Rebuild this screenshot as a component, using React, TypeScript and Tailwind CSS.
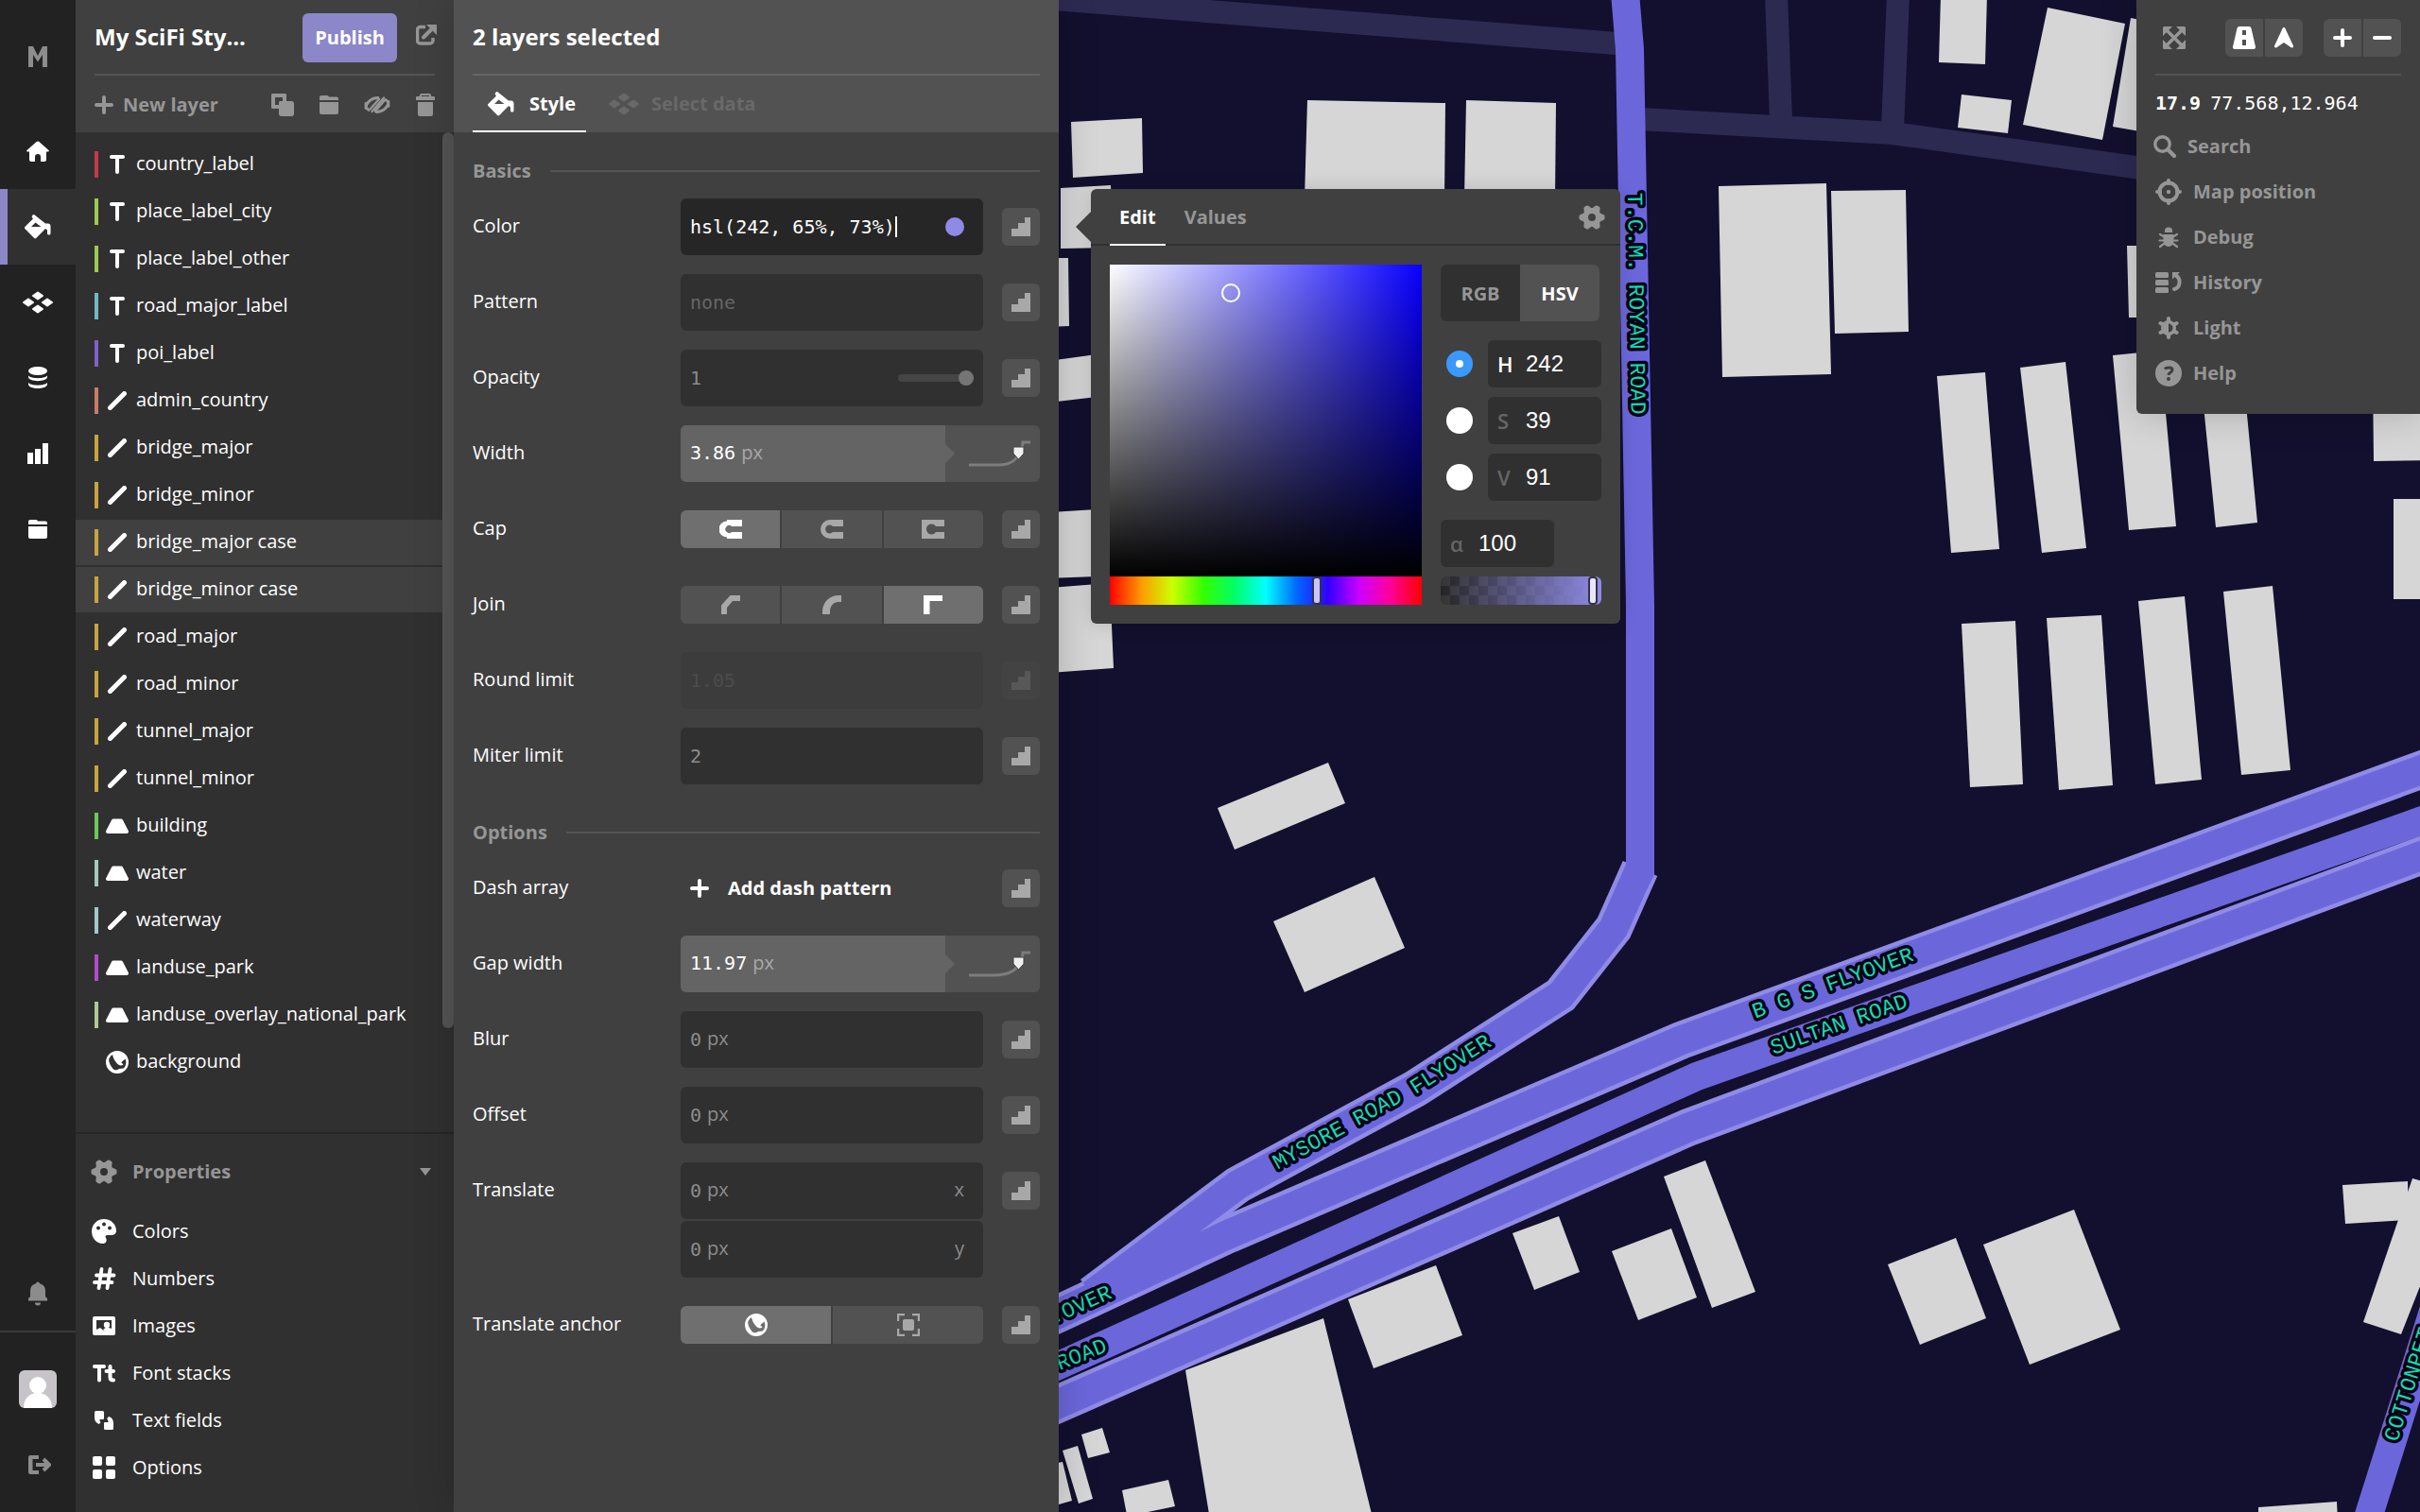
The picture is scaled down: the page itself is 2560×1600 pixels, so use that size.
import React, { useState } from "react";

type Kids = { children?: React.ReactNode };

const sans = "font-['Open_Sans','Noto_Sans',sans-serif]";
const mono = "font-['DejaVu_Sans_Mono','Liberation_Mono',monospace]";

function Svg({ w, h, children, className = "" }: Kids & { w: number; h: number; className?: string }) {
  return (
    <svg width={w} height={h} viewBox={`0 0 ${w} ${h}`} fill="currentColor" className={`shrink-0 ${className}`} aria-hidden="true">
      {children}
    </svg>
  );
}

const round = { fill: "none", stroke: "currentColor", strokeLinecap: "round", strokeLinejoin: "round" } as const;

const LogoIcon = () => (
  <Svg w={20} h={22}>
    <path d="M0 22V0h5l5 10 5-10h5v22h-5V9l-5 7.500-5-7.500v13z" />
  </Svg>
);
const HomeIcon = () => (
  <Svg w={24} h={22}>
    <path d="M12 .5c.6 0 1 .3 1.400.6L23.500 10c.8.8.3 1.500-.5 1.500H21V20a2 2 0 0 1-2 2h-4v-5a3 3 0 0 0-6 0v5H5a2 2 0 0 1-2-2v-8.500H1c-.8 0-1.300-.7-.5-1.500L10.600 1.100C11 .8 11.400.5 12 .5z" />
  </Svg>
);
const PaintIcon = () => (
  <Svg w={28} h={26}>
    <path
      fillRule="evenodd"
      d="M8.200 1.200a1.800 1.800 0 0 1 2.800-.4l11 8.700h2.500A3 3 0 0 1 27.500 12.500V20c0 2-3.500 2-3.500 0v-3.500L22 15l-9.500 9.800a1.800 1.800 0 0 1-2.600 0L.6 15.300a1.800 1.800 0 0 1 0-2.500L9 4.500 8 3.300a1.700 1.700 0 0 1 .2-2.100zM11.500 8.500L7 13h10.500z"
    />
  </Svg>
);
const DiamondsIcon = () => (
  <Svg w={32} h={24}>
    {[
      [16, 5],
      [6, 12],
      [26, 12],
      [16, 19],
    ].map(([x, y]) => (
      <path key={`${x}-${y}`} d={`M${x - 5} ${y}l5-3.500 5 3.500-5 3.500z`} stroke="currentColor" strokeWidth="2" strokeLinejoin="round" />
    ))}
  </Svg>
);
const DatabaseIcon = () => (
  <Svg w={20} h={24}>
    <ellipse cx="10" cy="4.500" rx="10" ry="4.500" />
    <path d="M0 9.500c3 3.500 17 3.500 20 0v1.500c0 5.500-20 5.500-20 0zM0 17c3 3.500 17 3.500 20 0v1.500c0 6-20 6-20 0z" />
  </Svg>
);
const ChartIcon = () => (
  <Svg w={22} h={22}>
    <path d="M0 10h6v12H0zM8 6h6v16H8zM16 0h6v22h-6z" />
  </Svg>
);
const FolderIcon = () => (
  <Svg w={20} h={20}>
    <path d="M0 2a2 2 0 0 1 2-2h6a2 2 0 0 1 2 1.500h8a2 2 0 0 1 2 2V5H0zM0 7h20v11a2 2 0 0 1-2 2H2a2 2 0 0 1-2-2z" />
  </Svg>
);
const BellIcon = () => (
  <Svg w={20} h={26}>
    <path d="M10 .5a2 2 0 0 1 2 1.700A8 8 0 0 1 18 10v6l2 2v2.500H0V18l2-2v-6A8 8 0 0 1 8 2.200 2 2 0 0 1 10 .5zM7 22.500h6a3 3 0 0 1-6 0z" />
  </Svg>
);
const LogoutIcon = () => (
  <Svg w={24} h={20}>
    <path d="M2 0h9v4H4.500v12H11v4H2a2 2 0 0 1-2-2V2a2 2 0 0 1 2-2z" />
    <path d="M8 10h14M16 4l6 6-6 6" {...round} strokeWidth="4" strokeLinecap="butt" />
  </Svg>
);
const ExternalIcon = () => (
  <Svg w={22} h={22}>
    <path d="M10 2.500H4.500a3 3 0 0 0-3 3V17a3 3 0 0 0 3 3H15a3 3 0 0 0 3-3v-3" {...round} strokeWidth="3.500" strokeLinecap="butt" />
    <path d="M8 13.500l8-8" {...round} strokeWidth="4" />
    <path d="M11 0h11v11z" />
  </Svg>
);
const PlusIcon = ({ size = 20 }: { size?: number }) => (
  <Svg w={size} h={size}>
    <path d={`M2 ${size / 2}H${size - 2}M${size / 2} 2V${size - 2}`} {...round} strokeWidth="4" />
  </Svg>
);
const MinusIcon = () => (
  <Svg w={20} h={20}>
    <path d="M2 10h16" {...round} strokeWidth="4" />
  </Svg>
);
const CopyIcon = () => (
  <Svg w={24} h={24}>
    <path fillRule="evenodd" d="M1.500 0h13A1.500 1.500 0 0 1 16 1.500V8h5.500c1.500 0 2.500 1 2.500 2.500v11c0 1.500-1 2.500-2.500 2.500h-11C9 24 8 23 8 21.500V16H1.500A1.500 1.500 0 0 1 0 14.500v-13A1.500 1.500 0 0 1 1.500 0zM4 4v8h4V9.500C8 8.500 8.500 8 9.500 8H12V4z" />
  </Svg>
);
const EyeOffIcon = () => (
  <Svg w={28} h={20}>
    <path d="M2 13.500C2.500 7 8 2.500 15 2.500M26 6.500C25.500 13 20 17.500 13 17.500M2 8.500l0 4 3 3M26 11.500l0-4-3-3" {...round} strokeWidth="2.800" />
    <path d="M8.500 17L21 2.500M6.500 14.500L16 4M12 16.500L22 5" {...round} strokeWidth="2.400" />
  </Svg>
);
const TrashIcon = () => (
  <Svg w={20} h={24}>
    <path fillRule="evenodd" d="M5 0h10l1.500 3H19a1 1 0 0 1 1 1v3H0V4a1 1 0 0 1 1-1h2.500zM6 2v1h8V2z" />
    <path d="M2 9h16v13a2 2 0 0 1-2 2H4a2 2 0 0 1-2-2z" />
  </Svg>
);
const TextIcon = () => (
  <Svg w={24} h={20}>
    <path d="M6 2h12M12 2.500V18" {...round} strokeWidth="4" />
  </Svg>
);
const LineIcon = () => (
  <Svg w={24} h={20}>
    <path d="M4.500 17.500l15-15" {...round} strokeWidth="5" />
  </Svg>
);
const FillIcon = () => (
  <Svg w={24} h={20}>
    <path d="M8 2.500h8a2 2 0 0 1 1.800 1L23.700 15a2 2 0 0 1-1.700 3H2a2 2 0 0 1-1.700-3L6.200 3.500A2 2 0 0 1 8 2.500z" />
  </Svg>
);
const GlobeIcon = () => (
  <Svg w={24} h={24}>
    <circle cx="12" cy="12" r="10.700" fill="none" stroke="currentColor" strokeWidth="2.600" />
    <path d="M7 2.500C7 7 9 10 11.500 13c1.500 2 4 3 6.500 2 1-1-.5-2-1.500-2 0-2 2.500-3 5.500-5.500C21 4 16 1 12 1 9 1 8 1.500 7 2.500zM3 8c0 4 2 8 4.500 11C9 21 12 20.500 14 19l5-.5-4 4H9c-4-1-7-5-7.500-9z" />
  </Svg>
);
const GearIcon = () => (
  <Svg w={28} h={28}>
    <circle cx="14" cy="14" r="7" fill="none" stroke="currentColor" strokeWidth="6" />
    {[0, 60, 120, 180, 240, 300].map((a) => (
      <path key={a} d="M8.500 20h11L17 26a2 2 0 0 1-2 1.500h-2a2 2 0 0 1-2-1.500z" transform={`rotate(${a + 30} 14 14)`} />
    ))}
  </Svg>
);
const PaletteIcon = () => (
  <Svg w={28} h={28}>
    <path
      fillRule="evenodd"
      d="M14 1c7.500 0 13 5.500 13 12.500 0 3-2.500 4.500-5 4.500h-4.500c-2 0-2.500 2-1.500 3 1.500 2 .5 6-3 6C6 27 1 21 1 14S6.500 1 14 1zm0 3.500a2 2 0 1 0 0 4 2 2 0 0 0 0-4zM8 8.500a2 2 0 1 0 0 4 2 2 0 0 0 0-4zm12 0a2 2 0 1 0 0 4 2 2 0 0 0 0-4z"
    />
  </Svg>
);
const HashIcon = () => (
  <Svg w={28} h={28}>
    <path d="M11.500 4L8.500 24M20.500 4l-3 20M6 10.500h18.500M4 18h18.500" {...round} strokeWidth="3.800" />
  </Svg>
);
const ImageIcon = () => (
  <Svg w={28} h={28}>
    <path fillRule="evenodd" d="M4 4h20a2 2 0 0 1 2 2v16a2 2 0 0 1-2 2H4a2 2 0 0 1-2-2V6a2 2 0 0 1 2-2zm2 4v10l4-2 4 3.500 3-2 5 .5V8z" />
    <circle cx="17" cy="13" r="3.200" />
    <path d="M13 18l4-3 5 2v2H14z" />
  </Svg>
);
const TtIcon = () => (
  <Svg w={28} h={28}>
    <path d="M4 7h10M9 7v14.500" {...round} strokeWidth="4" />
    <path d="M20.500 7v11.500q0 3 3.500 3M16.500 12h7.500" {...round} strokeWidth="4" />
  </Svg>
);
const TextFieldIcon = () => (
  <Svg w={28} h={28}>
    <path d="M5.500 4h7A1.500 1.500 0 0 1 14 5.500V12a1 1 0 0 1-1 1H9.500c0 2 .5 2.500 1 3.500L8.500 18C5 16 4 14 4 11V5.500A1.500 1.500 0 0 1 5.500 4zM22.500 24h-7a1.500 1.500 0 0 1-1.500-1.500V17a1 1 0 0 1 1-1h3.500c0-2-.5-3-1.500-3.500l2-2.500C22.500 11 24 14 24 17v5.500a1.500 1.500 0 0 1-1.500 1.500z" />
  </Svg>
);
const GridIcon = () => (
  <Svg w={28} h={28}>
    <rect x="2" y="2" width="10" height="10" rx="2" />
    <rect x="16" y="2" width="10" height="10" rx="2" />
    <rect x="2" y="16" width="10" height="10" rx="2" />
    <rect x="16" y="16" width="10" height="10" rx="2" />
  </Svg>
);
const StepsIcon = () => (
  <Svg w={20} h={20}>
    <path d="M0 20v-8h7V6h7V0h6v20z" />
  </Svg>
);
const ExpandIcon = () => (
  <Svg w={24} h={24}>
    <path d="M4 4l16 16M20 4L4 20" {...round} strokeWidth="3.500" />
    <path d="M0 1.500A1.500 1.500 0 0 1 1.500 0H10L0 10zM24 1.500A1.500 1.500 0 0 0 22.500 0H14l10 10zM0 22.500A1.500 1.500 0 0 0 1.500 24H10L0 14zM24 22.500a1.500 1.500 0 0 1-1.500 1.500H14l10-10z" />
  </Svg>
);
const RoadIcon = () => (
  <Svg w={24} h={24}>
    <path fillRule="evenodd" d="M7 0h10a2.500 2.500 0 0 1 2.500 2L24 21.500a2 2 0 0 1-2 2.500H2a2 2 0 0 1-2-2.500L4.500 2A2.500 2.500 0 0 1 7 0zm3 4v5h4V4zm0 10v6h4v-6z" />
  </Svg>
);
const ArrowIcon = () => (
  <Svg w={22} h={24}>
    <path d="M11 1q1 0 1.500 1.200L21 20.500q.5 2.500-2 2L11 17l-8 5.500q-2.500.5-2-2L9.500 2.200Q10 1 11 1z" />
  </Svg>
);
const SearchIcon = () => (
  <Svg w={24} h={24}>
    <circle cx="9.500" cy="9.500" r="7.700" fill="none" stroke="currentColor" strokeWidth="3.400" />
    <path d="M15 15l7 7" {...round} strokeWidth="4.200" />
  </Svg>
);
const TargetIcon = () => (
  <Svg w={28} h={28}>
    <circle cx="14" cy="14" r="9.500" fill="none" stroke="currentColor" strokeWidth="4" />
    <circle cx="14" cy="14" r="2.200" />
    <path d="M14 2v3M14 23v3M2 14h3M23 14h3" {...round} strokeWidth="4" />
  </Svg>
);
const BugIcon = () => (
  <Svg w={28} h={28}>
    <path d="M10 9V7a4 3.500 0 0 1 8 0v2zM8.500 11h11v7a5.500 6 0 0 1-11 0z" />
    <path d="M5 11l5 3h8l5-3M4.500 17.500h19M5 24l4-3h10l4 3" {...round} strokeWidth="2.200" />
  </Svg>
);
const HistoryIcon = () => (
  <Svg w={28} h={28}>
    <rect x="0" y="3" width="14" height="6" rx="1.500" />
    <rect x="0" y="11" width="14" height="6" rx="1.500" />
    <rect x="0" y="19" width="14" height="6" rx="1.500" />
    <path d="M20 21c7-2 7-11 2-14.500" {...round} strokeWidth="4" />
    <path d="M18 3h8l-8 7.500z" />
  </Svg>
);
const LightIcon = () => (
  <Svg w={28} h={28}>
    <path d="M14 4v20M5.500 9l17 10M22.500 9l-17 10" {...round} strokeWidth="4" />
    <circle cx="14" cy="14" r="8" />
    <path d="M14 9.500a4.500 4.500 0 0 1 0 9z" fill="#404040" />
  </Svg>
);
const HelpIcon = () => (
  <Svg w={28} h={28}>
    <circle cx="14" cy="14" r="14" />
    <path d="M10 9.500c1.500-2 8-2.500 8 1 0 2.500-4 2.500-4 5.500" fill="none" stroke="#404040" strokeWidth="3" />
    <circle cx="14" cy="20" r="2" fill="#404040" />
  </Svg>
);

const CapButt = () => (
  <Svg w={24} h={20}>
    <path d="M8 0h16v7H13a4 4 0 1 0 0 6h11v7H8v-1.500A8.500 8.500 0 0 1 8 1.500z" />
  </Svg>
);
const CapRound = () => (
  <Svg w={24} h={20}>
    <path d="M10 0h14v7H13a4.500 4.500 0 1 0 0 6h11v7H10a10 10 0 0 1 0-20z" />
  </Svg>
);
const CapSquare = () => (
  <Svg w={24} h={20}>
    <path d="M0 0h24v7h-9a5.500 5.500 0 1 0 0 6h9v7H0z" />
  </Svg>
);
const JoinBevel = () => (
  <Svg w={20} h={20}>
    <path d="M0 20v-9.500L9.500 0H20v6h-8l-6 7v7z" />
  </Svg>
);
const JoinRound = () => (
  <Svg w={20} h={20}>
    <path d="M0 20v-3C0 7 8 0 17 0h3v7h-3c-5 0-9 4-9 10v3z" />
  </Svg>
);
const JoinMiter = () => (
  <Svg w={20} h={20}>
    <path d="M0 20V0h20v6H6.500v14z" />
  </Svg>
);
const ViewportIcon = () => (
  <Svg w={24} h={24}>
    <path d="M1 8V1h7M16 1h7v7M23 16v7h-7M8 23H1v-7" fill="none" stroke="currentColor" strokeWidth="2.400" />
    <rect x="6" y="6" width="12" height="12" rx="2" />
  </Svg>
);

/* ---------- navigation rail ---------- */

function Rail() {
  const items = [
    { name: "Home", icon: <HomeIcon /> },
    { name: "Styles", icon: <PaintIcon />, active: true },
    { name: "Tilesets", icon: <DiamondsIcon /> },
    { name: "Datasets", icon: <DatabaseIcon /> },
    { name: "Statistics", icon: <ChartIcon /> },
    { name: "Classic", icon: <FolderIcon /> },
  ];
  return (
    <nav className="flex w-20 shrink-0 flex-col bg-[#222222] text-white">
      <a href="#logo" aria-label="Studio" className="flex h-[120px] items-center justify-center text-[#8c8c8c]">
        <LogoIcon />
      </a>
      {items.map((it) => (
        <a
          key={it.name}
          href={`#${it.name}`}
          aria-label={it.name}
          className={`flex h-20 items-center justify-center ${it.active ? "border-l-8 border-[#8b87c8] bg-[#303030] pr-2" : ""}`}
        >
          {it.icon}
        </a>
      ))}
      <div className="mt-auto flex flex-col text-[#8c8c8c]">
        <button aria-label="Notifications" className="flex h-20 items-center justify-center border-b-2 border-[#3a3a3a]">
          <BellIcon />
        </button>
        <a href="#account" aria-label="Account" className="flex h-[120px] items-center justify-center">
          <svg width="40" height="40" viewBox="0 0 40 40" className="rounded-md bg-[#c6c4c8]" fill="#ffffff" aria-hidden="true">
            <circle cx="20" cy="16" r="9" />
            <path d="M5 40c0-9 5-16 15-16s15 7 15 16z" />
          </svg>
        </a>
        <button aria-label="Log out" className="mb-[30px] flex h-10 items-center justify-center pl-1">
          <LogoutIcon />
        </button>
      </div>
    </nav>
  );
}

/* ---------- layer list ---------- */

type Layer = { name: string; color: string; kind: "text" | "line" | "fill" | "globe"; on?: boolean };
const layers: Layer[] = [
  { name: "country_label", color: "bg-[#c63a49]", kind: "text" },
  { name: "place_label_city", color: "bg-[#a0c850]", kind: "text" },
  { name: "place_label_other", color: "bg-[#a0c850]", kind: "text" },
  { name: "road_major_label", color: "bg-[#70b8c8]", kind: "text" },
  { name: "poi_label", color: "bg-[#7d62c8]", kind: "text" },
  { name: "admin_country", color: "bg-[#c87d68]", kind: "line" },
  { name: "bridge_major", color: "bg-[#c8a440]", kind: "line" },
  { name: "bridge_minor", color: "bg-[#c8a440]", kind: "line" },
  { name: "bridge_major case", color: "bg-[#c8a440]", kind: "line", on: true },
  { name: "bridge_minor case", color: "bg-[#c8a440]", kind: "line", on: true },
  { name: "road_major", color: "bg-[#c8a440]", kind: "line" },
  { name: "road_minor", color: "bg-[#c8a440]", kind: "line" },
  { name: "tunnel_major", color: "bg-[#c8a440]", kind: "line" },
  { name: "tunnel_minor", color: "bg-[#c8a440]", kind: "line" },
  { name: "building", color: "bg-[#6cc858]", kind: "fill" },
  { name: "water", color: "bg-[#a4c8be]", kind: "fill" },
  { name: "waterway", color: "bg-[#a4c8cc]", kind: "line" },
  { name: "landuse_park", color: "bg-[#b04cc8]", kind: "fill" },
  { name: "landuse_overlay_national_park", color: "bg-[#b0c898]", kind: "fill" },
  { name: "background", color: "bg-transparent", kind: "globe" },
];
const kindIcon = { text: <TextIcon />, line: <LineIcon />, fill: <FillIcon />, globe: <GlobeIcon /> };

function LayerPanel() {
  const props = [
    { name: "Colors", icon: <PaletteIcon /> },
    { name: "Numbers", icon: <HashIcon /> },
    { name: "Images", icon: <ImageIcon /> },
    { name: "Font stacks", icon: <TtIcon /> },
    { name: "Text fields", icon: <TextFieldIcon /> },
    { name: "Options", icon: <GridIcon /> },
  ];
  return (
    <aside className="flex w-[400px] shrink-0 flex-col bg-[#303030] text-white">
      <header className="h-[140px] bg-[#404040] px-5">
        <div className="flex h-20 items-center border-b-2 border-[#555555]">
          <h1 className="text-[24px] font-bold">My SciFi Sty...</h1>
          <button className="ml-auto mr-5 mt-[2px] h-[52px] w-[100px] rounded-md bg-[#8b87c8] text-[20px] font-bold">Publish</button>
          <a href="#share" aria-label="Open preview" className="-mr-[2px] mb-1 text-[#969696]">
            <ExternalIcon />
          </a>
        </div>
        <div className="flex h-[62px] items-center text-[#969696]">
          <button className="flex items-center gap-[10px] text-[20px] font-bold">
            <PlusIcon />
            New layer
          </button>
          <div className="ml-auto flex items-center gap-[27px]">
            <button aria-label="Duplicate layer"><CopyIcon /></button>
            <button aria-label="Group layers"><FolderIcon /></button>
            <button aria-label="Hide layers"><EyeOffIcon /></button>
            <button aria-label="Delete layers"><TrashIcon /></button>
          </div>
        </div>
      </header>
      <div className="flex grow items-start">
        <ul className="flex grow flex-col gap-[2px] pt-[10px]">
          {layers.map((l) => (
            <li key={l.name} className={l.on ? "bg-[#404040]" : ""}>
              <button className="flex h-12 w-full items-center pl-5 text-[20px]">
                <span className={`h-7 w-1 ${l.color}`} />
                <span className="ml-2 mr-2 flex w-6 justify-center">{kindIcon[l.kind]}</span>
                <span className="pb-[2px]">{l.name}</span>
              </button>
            </li>
          ))}
        </ul>
        <div className="h-[948px] w-3 shrink-0 rounded-full bg-[#555555]" />
      </div>
      <section className="border-t-2 border-[#262626] pb-[22px] pt-4">
        <button className="flex h-12 w-full items-center pl-4 pr-6 text-[20px] font-bold text-[#969696]">
          <GearIcon />
          <span className="ml-4">Properties</span>
          <Svg w={12} h={8} className="ml-auto">
            <path d="M0 0h12L6 8z" />
          </Svg>
        </button>
        <ul className="mt-[14px]">
          {props.map((p) => (
            <li key={p.name}>
              <button className="flex h-[50px] w-full items-center gap-4 pl-4 text-[20px]">
                {p.icon}
                {p.name}
              </button>
            </li>
          ))}
        </ul>
      </section>
    </aside>
  );
}

/* ---------- style panel ---------- */

function Heading({ children }: Kids) {
  return (
    <div className="mb-[14px] flex h-[30px] items-center gap-5">
      <h3 className="text-[20px] font-bold text-[#969696]">{children}</h3>
      <span className="h-[2px] grow bg-[#555555]" />
    </div>
  );
}

function Row({ label, id, children, step = true, dim = false }: Kids & { label: string; id?: string; step?: boolean; dim?: boolean }) {
  return (
    <div className="flex min-h-[60px] items-start">
      <label htmlFor={id} className="flex h-[60px] w-[220px] shrink-0 items-center pb-[2px] text-[20px]">
        {label}
      </label>
      <div className="flex min-h-[60px] grow flex-col justify-center gap-[2px]">{children}</div>
      {step && (
        <button
          aria-label={`${label} across zoom levels`}
          className={`ml-5 mt-[10px] flex size-10 items-center justify-center rounded-md ${
            dim ? "bg-[#434343] text-[#585858]" : "bg-[#525252] text-[#a8a8a8]"
          }`}
        >
          <StepsIcon />
        </button>
      )}
    </div>
  );
}

function Field({
  id,
  value,
  unit,
  axis,
  tone = "text-[#8c8c8c]",
  bg = "bg-[#303030]",
  children,
}: Kids & { id: string; value: string; unit?: string; axis?: string; tone?: string; bg?: string }) {
  const [v, setV] = useState(value);
  return (
    <div className={`flex h-[60px] items-center rounded-md px-[10px] text-[20px] ${bg} ${tone}`}>
      <input
        id={id}
        aria-label={id}
        value={v}
        onChange={(e) => setV(e.target.value)}
        style={{ width: `${v.length}ch` }}
        className={`bg-transparent outline-none ${mono}`}
      />
      {unit && <span className="ml-[6px] pb-[2px]">{unit}</span>}
      {axis && <span className="ml-auto mr-[10px] pb-[2px]">{axis}</span>}
      {children}
    </div>
  );
}

function CurveField({ id, value, low }: { id: string; value: string; low: string }) {
  const [v, setV] = useState(value);
  return (
    <div className="flex h-[60px] overflow-hidden rounded-md bg-[#525252]">
      <div className="flex grow items-center bg-[#646464] pb-[2px] pl-[10px] text-[20px]">
        <input
          id={id}
          value={v}
          onChange={(e) => setV(e.target.value)}
          style={{ width: `${v.length}ch` }}
          className={`bg-transparent text-white outline-none ${mono}`}
        />
        <span className="ml-[6px] text-[#a8a8a8]">px</span>
      </div>
      <svg width="100" height="60" viewBox="0 0 100 60" className="shrink-0" aria-hidden="true">
        <path d="M0 20l10 10-10 10z" fill="#646464" />
        <path d={low} fill="none" stroke="#7d7d7d" strokeWidth="3" />
        <path d="M72 23h11v7l-5.500 6-5.500-6z" fill="#f0f0f0" stroke="#444444" />
      </svg>
    </div>
  );
}

function Segments({ label, items, on }: { label: string; items: { name: string; icon: React.ReactNode }[]; on: number }) {
  const [sel, setSel] = useState(on);
  return (
    <div role="group" aria-label={label} className="flex h-10 gap-[2px] overflow-hidden rounded-md">
      {items.map((it, i) => (
        <button
          key={it.name}
          aria-label={it.name}
          aria-pressed={i === sel}
          onClick={() => setSel(i)}
          className={`flex grow basis-0 items-center justify-center ${i === sel ? "bg-[#6f6f6f] text-white" : "bg-[#525252] text-[#a8a8a8]"}`}
        >
          {it.icon}
        </button>
      ))}
    </div>
  );
}

function StylePanel() {
  return (
    <section className="relative z-10 flex w-[640px] shrink-0 flex-col bg-[#404040] text-white shadow-[0_0_40px_rgba(0,0,0,0.2)]">
      <header className="h-[140px] bg-[#525252] px-5">
        <div className="flex h-20 items-center border-b-2 border-[#656565]">
          <h2 className="text-[24px] font-bold">2 layers selected</h2>
        </div>
        <div role="tablist" className="flex h-[60px] text-[20px] font-bold">
          <button role="tab" aria-selected="true" className="flex w-[120px] items-center gap-4 border-b-2 border-white pl-4 pt-[2px]">
            <PaintIcon />
            Style
          </button>
          <button role="tab" aria-selected="false" className="ml-6 flex items-center gap-[13px] text-[#696969]">
            <DiamondsIcon />
            Select data
          </button>
        </div>
      </header>

      <div className="px-5 pt-[26px]">
        <Heading>Basics</Heading>
        <div className="flex flex-col gap-5">
          <Row label="Color" id="color">
            <Field id="color" value="hsl(242, 65%, 73%)" bg="bg-[#262626]" tone="text-white">
              <span className="h-[22px] w-[2px] bg-white" />
              <span className="ml-auto mr-[10px] size-5 rounded-full bg-[#8f8ae6]" />
            </Field>
          </Row>
          <Row label="Pattern" id="pattern">
            <Field id="pattern" value="none" tone="text-[#666666]" />
          </Row>
          <Row label="Opacity" id="opacity">
            <Field id="opacity" value="1">
              <input
                type="range"
                aria-label="Opacity slider"
                min="0"
                max="1"
                step="0.01"
                defaultValue="1"
                className="ml-auto h-2 w-20 appearance-none rounded-full bg-[#454545] [&::-webkit-slider-thumb]:size-4 [&::-webkit-slider-thumb]:appearance-none [&::-webkit-slider-thumb]:rounded-full [&::-webkit-slider-thumb]:bg-[#757575]"
              />
            </Field>
          </Row>
          <Row label="Width" id="width" step={false}>
            <CurveField id="width" value="3.86" low="M25 42H58C70 42 78 36 82 20V18H90" />
          </Row>
          <Row label="Cap">
            <Segments
              label="Cap"
              on={0}
              items={[
                { name: "Butt", icon: <CapButt /> },
                { name: "Round", icon: <CapRound /> },
                { name: "Square", icon: <CapSquare /> },
              ]}
            />
          </Row>
          <Row label="Join">
            <Segments
              label="Join"
              on={2}
              items={[
                { name: "Bevel", icon: <JoinBevel /> },
                { name: "Round", icon: <JoinRound /> },
                { name: "Miter", icon: <JoinMiter /> },
              ]}
            />
          </Row>
          <Row label="Round limit" id="round" dim>
            <Field id="round" value="1.05" bg="bg-[#3c3c3c]" tone="text-[#4c4c4c]" />
          </Row>
          <Row label="Miter limit" id="miter">
            <Field id="miter" value="2" />
          </Row>
        </div>

        <div className="mt-9">
          <Heading>Options</Heading>
        </div>
        <div className="flex flex-col gap-5">
          <Row label="Dash array">
            <button className="flex items-center gap-5 pl-[10px] text-[20px] font-bold">
              <PlusIcon />
              Add dash pattern
            </button>
          </Row>
          <Row label="Gap width" id="gap" step={false}>
            <CurveField id="gap" value="11.97" low="M25 42H50C70 42 78 36 82 20V18H90" />
          </Row>
          <Row label="Blur" id="blur">
            <Field id="blur" value="0" unit="px" />
          </Row>
          <Row label="Offset" id="offset">
            <Field id="offset" value="0" unit="px" />
          </Row>
          <Row label="Translate" id="translate-x">
            <Field id="translate-x" value="0" unit="px" axis="x" />
            <Field id="translate-y" value="0" unit="px" axis="y" />
          </Row>
          <Row label="Translate anchor">
            <Segments
              label="Translate anchor"
              on={0}
              items={[
                { name: "Map", icon: <GlobeIcon /> },
                { name: "Viewport", icon: <ViewportIcon /> },
              ]}
            />
          </Row>
        </div>
      </div>
    </section>
  );
}

/* ---------- map ---------- */

const buildings = [
  "2053,-5 2102,-5 2100,68 2051,66",
  "2075,100 2128,106 2124,141 2071,135",
  "2166,8 2248,25 2224,148 2140,132",
  "2254,19 2340,36 2316,148 2235,134",
  "1818,197 1932,194 1937,396 1822,399",
  "1937,202 2016,201 2019,351 1941,353",
  "2250,260 2300,260 2300,336 2252,336",
  "2049,398 2100,394 2115,581 2064,585",
  "2137,389 2185,383 2207,580 2160,585",
  "2235,376 2285,371 2302,557 2252,561",
  "2325,370 2370,366 2388,553 2344,558",
  "2510,400 2570,400 2570,487 2511,488",
  "2532,528 2570,528 2570,634 2532,634",
  "2075,660 2132,657 2140,830 2084,833",
  "2165,654 2223,651 2235,831 2178,836",
  "2262,636 2311,631 2329,825 2280,830",
  "2352,626 2404,620 2423,815 2371,820",
  "1133,129 1208,125 1209,183 1135,188",
  "1122,199 1175,196 1178,262 1122,263",
  "1110,273 1130,273 1131,345 1110,346",
  "1110,382 1160,375 1160,420 1110,426",
  "1110,542 1160,539 1160,610 1110,612",
  "1110,622 1174,617 1178,707 1110,712",
  "1383,106 1529,109 1528,210 1380,210",
  "1551,106 1646,109 1645,210 1549,210",
  "1288,855 1405,807 1423,850 1306,899",
  "1347,975 1454,928 1486,1003 1380,1050",
  "1426,1375 1519,1339 1547,1413 1453,1448",
  "1600,1305 1649,1287 1671,1346 1623,1365",
  "1705,1324 1768,1300 1795,1373 1733,1397",
  "1760,1245 1804,1228 1857,1367 1811,1384",
  "1254,1450 1400,1395 1451,1602 1279,1602",
  "1144,1518 1166,1511 1174,1537 1151,1543",
  "1124,1535 1140,1530 1156,1586 1141,1591",
  "1110,1550 1124,1547 1134,1588 1110,1595",
  "1187,1577 1236,1566 1243,1594 1200,1603 1192,1603",
  "1997,1338 2069,1310 2101,1395 2031,1423",
  "2098,1317 2194,1280 2243,1407 2147,1444",
  "2478,1254 2547,1250 2548,1291 2481,1295",
  "2552,1247 2600,1260 2540,1412 2500,1399",
  "2389,1595 2472,1589 2473,1610 2389,1610",
];
const flyovers = [
  "1080,1408 1120,1390 1300,1306 1778,1101 2560,815 2640,786",
  "1155,1370 1309,1254 1497,1152 1651,1053 1707,982 1735,919",
  "1080,1503 1786,1193 2560,906 2640,876",
];
const labels = [
  { id: "royan", d: "M1730 203L1734 460", text: "T.C.M. ROYAN ROAD", at: 1 },
  { id: "mysore", d: "M1309 1252L1497 1149L1651 1050", text: "MYSORE ROAD FLYOVER", at: 44 },
  { id: "bgs", d: "M1778 1098L2560 812", text: "B G S FLYOVER", at: 81 },
  { id: "sultan", d: "M1795 1136L2560 866", text: "SULTAN ROAD", at: 83 },
  { id: "west", d: "M1080 1408L1200 1354", text: "YOVER", at: 34 },
  { id: "westroad", d: "M1080 1458L1220 1402", text: "ROAD", at: 41 },
  { id: "cotton", d: "M2528 1525L2600 1297", text: "COTTONPET", at: 1 },
];

function MapCanvas() {
  return (
    <svg className="absolute inset-0 h-full w-full" viewBox="1120 0 1440 1600" preserveAspectRatio="xMinYMin slice" aria-label="Map preview">
      <rect x="1120" y="0" width="1440" height="1600" fill="#12102e" />
      <g fill="none" stroke="#2d2a52" strokeWidth="24">
        <path d="M1100-2L1710 46M1735 126L2002 141L2280 180M1879-5L1884 126M2008-5L2002 136" />
      </g>
      <g fill="#d6d6d6">
        {buildings.map((b) => (
          <polygon key={b} points={b} />
        ))}
      </g>
      <g fill="none" stroke="#6b67db" strokeWidth="30">
        <polyline points="1718,-20 1724,52 1735,640 1735,922" />
        <polyline points="1080,1463 1795,1139 2560,869 2640,841" />
        <polyline points="2500,1622 2560,1432 2600,1305" />
      </g>
      <g fill="none" stroke="#8f8be6" strokeWidth="40">
        {flyovers.map((p) => (
          <polyline key={p} points={p} />
        ))}
      </g>
      <g fill="none" stroke="#6b67db" strokeWidth="31">
        {flyovers.map((p) => (
          <polyline key={p} points={p} />
        ))}
        <polyline points="1735,880 1735,922 1728,936" strokeWidth="30" />
      </g>
      {labels.map((l) => (
        <g key={l.id}>
          <path id={l.id} d={l.d} fill="none" />
          <text
            dy="8"
            fill="#12dcb6"
            stroke="#020012"
            strokeWidth="7"
            strokeLinejoin="round"
            paintOrder="stroke"
            className="font-['Liberation_Mono',monospace] text-[23px]"
          >
            <textPath href={`#${l.id}`} startOffset={l.at}>
              {l.text}
            </textPath>
          </text>
        </g>
      ))}
    </svg>
  );
}

/* ---------- colour picker ---------- */

function Channel({ name, value, on = false }: { name: string; value: string; on?: boolean }) {
  return (
    <div className="flex items-center gap-4 pl-[6px]">
      <input
        type="radio"
        name="channel"
        aria-label={`Channel ${name}`}
        defaultChecked={on}
        className="size-7 shrink-0 appearance-none rounded-full bg-white checked:border-[10px] checked:border-[#3b99fc]"
      />
      <label className={`flex h-[50px] grow items-center rounded-md bg-[#303030] pl-[10px] text-[22px] font-semibold ${on ? "text-white" : "text-[#666666]"}`}>
        <span className="w-[30px]">{name}</span>
        <input defaultValue={value} className="w-16 bg-transparent font-['Liberation_Sans',sans-serif] text-[24px] font-normal text-white outline-none" />
      </label>
    </div>
  );
}

function ColorPicker() {
  return (
    <div className="absolute left-[34px] top-[200px] z-20 w-[560px] rounded-md bg-[#404040] text-white shadow-[0_0_20px_rgba(0,0,0,0.15)]">
      <svg width="16" height="32" viewBox="0 0 16 32" className="absolute -left-4 top-6" aria-hidden="true">
        <path d="M16 0v32L0 16z" fill="#404040" />
      </svg>
      <div role="tablist" className="flex h-[60px] items-stretch border-b-2 border-[#303030] px-5 text-[20px] font-bold">
        <button role="tab" aria-selected="true" className="-mb-[2px] border-b-2 border-white px-[10px] pt-[2px]">
          Edit
        </button>
        <button role="tab" aria-selected="false" className="ml-[10px] px-[10px] pt-[2px] text-[#969696]">
          Values
        </button>
        <button aria-label="Picker settings" className="-mr-1 ml-auto pt-[2px] text-[#969696]">
          <GearIcon />
        </button>
      </div>
      <div className="flex gap-5 p-5">
        <div className="w-[330px]">
          <div className="relative h-[330px] bg-[linear-gradient(to_top,#000000,transparent),linear-gradient(to_right,#ffffff,#0800ff)]">
            <span className="absolute left-[118px] top-5 size-5 rounded-full border-2 border-white" />
          </div>
          <div className="relative h-[30px] bg-[linear-gradient(to_right,#ff0000,#ff9900_10%,#ccff00_20%,#33ff00_30%,#00ff66_40%,#00ffff_50%,#0066ff_60%,#3300ff_70%,#cc00ff_80%,#ff0099_90%,#ff0000)]">
            <span className="absolute left-[214px] top-0 h-[30px] w-[10px] rounded-[4px] border-2 border-[#333344] bg-[#c8c5ff]" />
          </div>
        </div>
        <div className="flex grow flex-col">
          <div className="flex h-[60px] w-[168px] overflow-hidden rounded-md bg-[#303030] text-[20px] font-bold">
            <button aria-pressed="false" className="grow basis-0 pt-[2px] text-[#969696]">RGB</button>
            <button aria-pressed="true" className="grow basis-0 bg-[#525252] pt-[2px]">HSV</button>
          </div>
          <div className="mt-5 flex flex-col gap-[10px]">
            <Channel name="H" value="242" on />
            <Channel name="S" value="39" />
            <Channel name="V" value="91" />
          </div>
          <label className="mt-5 flex h-[50px] w-[120px] items-center rounded-md bg-[#303030] pl-[10px] text-[22px] font-semibold text-[#666666]">
            <span className="w-[30px]">α</span>
            <input defaultValue="100" className="w-16 bg-transparent font-['Liberation_Sans',sans-serif] text-[24px] font-normal text-white outline-none" />
          </label>
          <div className="relative mt-[10px] h-[30px] overflow-hidden rounded-md bg-[#2a2a2a]">
            <div className="h-full bg-[conic-gradient(#242424_25%,#343434_0_50%,#242424_0_75%,#343434_0)] bg-[length:20px_20px]" />
            <div className="absolute inset-0 bg-[linear-gradient(to_right,transparent,#8f8be6)]" />
            <span className="absolute right-1 top-0 h-[30px] w-[10px] rounded-[4px] border-2 border-[#333344] bg-[#e8e6fa]" />
          </div>
        </div>
      </div>
    </div>
  );
}

function MapTools() {
  const tools = [
    { name: "Map position", icon: <TargetIcon /> },
    { name: "Debug", icon: <BugIcon /> },
    { name: "History", icon: <HistoryIcon /> },
    { name: "Light", icon: <LightIcon /> },
    { name: "Help", icon: <HelpIcon /> },
  ];
  const cell = "flex size-10 items-center justify-center bg-[#525252]";
  return (
    <aside className="absolute right-0 top-0 w-[300px] rounded-bl-md bg-[#404040] px-5 pb-[19px] text-white shadow-[0_0_40px_rgba(0,0,0,0.2)]">
      <div className="flex h-20 items-center border-b-2 border-[#525252] pl-2 pt-[2px]">
        <button aria-label="Full screen" className="text-[#969696]"><ExpandIcon /></button>
        <div className="ml-auto flex gap-[2px] overflow-hidden rounded-md">
          <button aria-label="Tilt" className={cell}><RoadIcon /></button>
          <button aria-label="Reset north" className={cell}><ArrowIcon /></button>
        </div>
        <div className="ml-[22px] flex gap-[2px] overflow-hidden rounded-md">
          <button aria-label="Zoom in" className={cell}><PlusIcon /></button>
          <button aria-label="Zoom out" className={cell}><MinusIcon /></button>
        </div>
      </div>
      <p className={`mt-3 flex h-[34px] items-center gap-[10px] text-[20px] ${mono}`}>
        <b>17.9</b>
        <span>77.568,12.964</span>
      </p>
      <ul className="mt-[5px] text-[20px] font-bold text-[#969696]">
        <li>
          <button className="-ml-[2px] flex h-12 items-center gap-3">
            <SearchIcon />
            Search
          </button>
        </li>
        {tools.map((t) => (
          <li key={t.name}>
            <button className="flex h-12 items-center gap-3">
              {t.icon}
              {t.name}
            </button>
          </li>
        ))}
      </ul>
    </aside>
  );
}

export default function App() {
  return (
    <div className={`flex min-h-screen ${sans}`}>
      <Rail />
      <LayerPanel />
      <StylePanel />
      <main className="relative grow bg-[#12102e]">
        <MapCanvas />
        <ColorPicker />
        <MapTools />
      </main>
    </div>
  );
}
